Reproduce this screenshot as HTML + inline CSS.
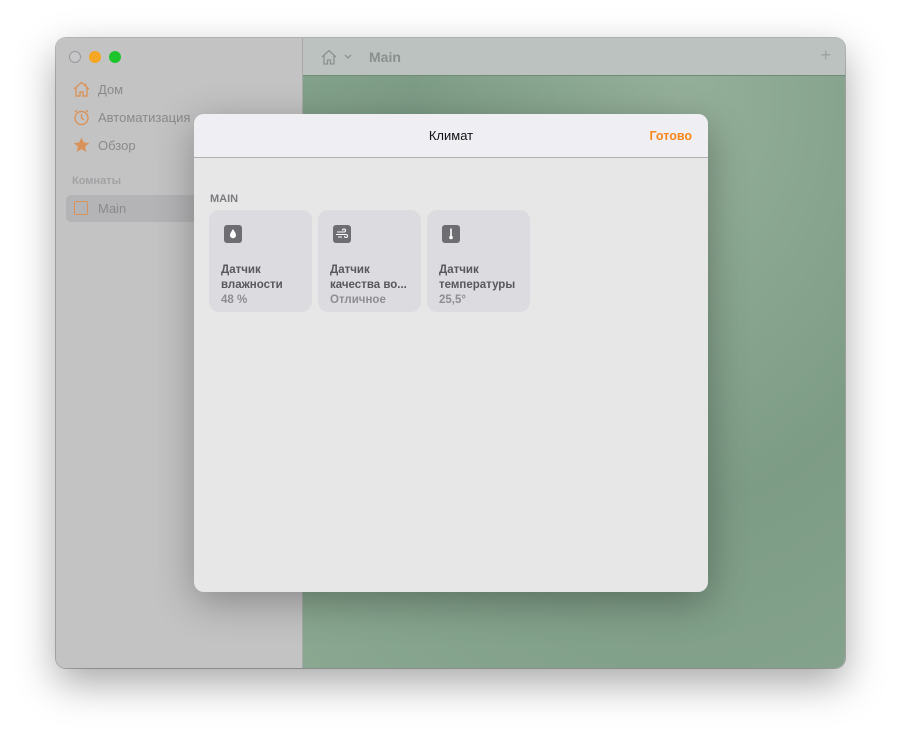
<!DOCTYPE html>
<html><head><meta charset="utf-8"><style>
*{margin:0;padding:0;box-sizing:border-box}
body{width:901px;height:742px;background:#fff;font-family:"Liberation Sans",sans-serif;position:relative;overflow:hidden}
.win{position:absolute;left:56px;top:38px;width:789px;height:630px;border-radius:10px;overflow:hidden;box-shadow:0 15px 40px rgba(0,0,0,.35),0 0 0 1px rgba(0,0,0,.25)}
.side{position:absolute;left:0;top:0;width:247px;height:100%;background:#c3c3c4;border-right:1px solid #a8a8a8}
.main{position:absolute;left:247px;top:0;right:0;height:100%;background:radial-gradient(ellipse at 70% 10%,#95b09a,#7d9c86 50%,#8aa891)}
.tb{position:absolute;left:0;top:0;right:0;height:38px;background:#bcc2bf;border-bottom:1px solid #6f8a76}
.dot{position:absolute;top:13px;width:12px;height:12px;border-radius:50%}
.it{position:absolute;left:42px;font-size:13px;color:#8a8a8c}
.ic{position:absolute;left:17px}
.modal{position:absolute;left:194px;top:114px;width:514px;height:478px;background:#e8e7e8;border-radius:10px;overflow:hidden;box-shadow:0 10px 40px rgba(0,0,0,.3)}
.mh{height:44px;background:#efeff3;border-bottom:1px solid #b0b0b2;position:relative}
.card{position:absolute;top:96px;width:103px;height:102px;background:#dcdbdf;border-radius:10px}
.ci{position:absolute;left:15px;top:15px;width:18px;height:18px;background:#6e6e72;border-radius:3px}
.ci svg{position:absolute;left:0;top:0}
.ct{position:absolute;left:12px;top:53px;font-size:11.5px;font-weight:bold;color:#58585c;line-height:15px}
.ct span{color:#8e8e92}
</style></head><body>
<div class="win">
 <div class="side">
  <div class="dot" style="left:13px;border:1px solid #9a9a9e;background:#c8c8ca"></div>
  <div class="dot" style="left:33px;background:#f5a623"></div>
  <div class="dot" style="left:53px;background:#1ec42c"></div>
  <svg class="ic" style="top:43px" width="17" height="16" viewBox="0 0 17 16" fill="none" stroke="#d9935a" stroke-width="1.4"><path d="M1 8L8.5 1.5 16 8M3 6.5V15h4v-4h3v4h4V6.5M12.5 2.5v2"/></svg>
  <svg class="ic" style="top:71px" width="17" height="17" viewBox="0 0 17 17" fill="none" stroke="#d9935a" stroke-width="1.4"><circle cx="8.5" cy="9" r="6.5"/><path d="M8.5 5v4l2.5 2M2 3l2-2M15 3l-2-2"/></svg>
  <svg class="ic" style="top:99px" width="17" height="16" viewBox="0 0 17 16"><path fill="#d9935a" d="M8.5 0.5l2.3 5 5.4.5-4.1 3.6 1.2 5.4-4.8-2.9-4.8 2.9 1.2-5.4L.8 6l5.4-.5z"/></svg>
  <div class="it" style="top:44px">Дом</div>
  <div class="it" style="top:72px">Автоматизация</div>
  <div class="it" style="top:100px">Обзор</div>
  <div style="position:absolute;left:16px;top:137px;font-size:11px;font-weight:bold;color:#a2a2a4">Комнаты</div>
  <div style="position:absolute;left:10px;top:157px;width:237px;height:27px;background:#b4b4b6;border-radius:5px"></div>
  <div style="position:absolute;left:18px;top:163px;width:14px;height:14px;border:1.5px solid #d9935a;border-radius:2px"></div>
  <div class="it" style="top:163px">Main</div>
 </div>
 <div class="main">
  <div class="tb">
   <svg style="position:absolute;left:18px;top:11px" width="16" height="16" viewBox="0 0 16 16" fill="none" stroke="#8d9290" stroke-width="1.3"><path d="M1 8L8 1.5 15 8M3 6.5V15h3.5v-4h3v4H13V6.5"/></svg>
   <svg style="position:absolute;left:41px;top:16px" width="8" height="6" viewBox="0 0 8 6" fill="none" stroke="#8d9290" stroke-width="1.3"><path d="M1 1l3 3 3-3"/></svg>
   <div style="position:absolute;left:66px;top:11px;font-size:14px;font-weight:bold;color:#8b908e">Main</div>
   <div style="position:absolute;right:14px;top:7px;font-size:18px;color:#9ea3a1">+</div>
  </div>
 </div>
</div>
<div class="modal">
 <div class="mh">
  <div style="position:absolute;left:0;right:0;top:14px;text-align:center;font-size:13px;color:#111">Климат</div>
  <div style="position:absolute;right:16px;top:15px;font-size:12.5px;font-weight:bold;color:#f7861b">Готово</div>
 </div>
 <div style="position:absolute;left:16px;top:78px;font-size:11px;font-weight:bold;color:#7c7c80;top:79px">MAIN</div>
 <div class="card" style="left:15px"><div class="ci"><svg width="18" height="18" viewBox="0 0 18 18"><path fill="#fff" d="M9 4C7.5 6.5 6 8.3 6 10.3a3 3 0 006 0C12 8.3 10.5 6.5 9 4z"/></svg></div><div class="ct">Датчик<br>влажности<br><span>48 %</span></div></div>
 <div class="card" style="left:124px"><div class="ci"><svg width="18" height="18" viewBox="0 0 18 18" fill="none" stroke="#fff" stroke-width="1.1"><path d="M4 7h7a1.5 1.5 0 10-1.5-1.5M3 9.5h10a1.5 1.5 0 11-1.5 1.5M5 12h4"/></svg></div><div class="ct">Датчик<br>качества во...<br><span>Отличное</span></div></div>
 <div class="card" style="left:233px"><div class="ci"><svg width="18" height="18" viewBox="0 0 18 18"><rect x="8.2" y="3.5" width="1.6" height="8" fill="#fff"/><circle cx="9" cy="12.5" r="1.8" fill="#fff"/></svg></div><div class="ct">Датчик<br>температуры<br><span>25,5°</span></div></div>
</div>
</body></html>
